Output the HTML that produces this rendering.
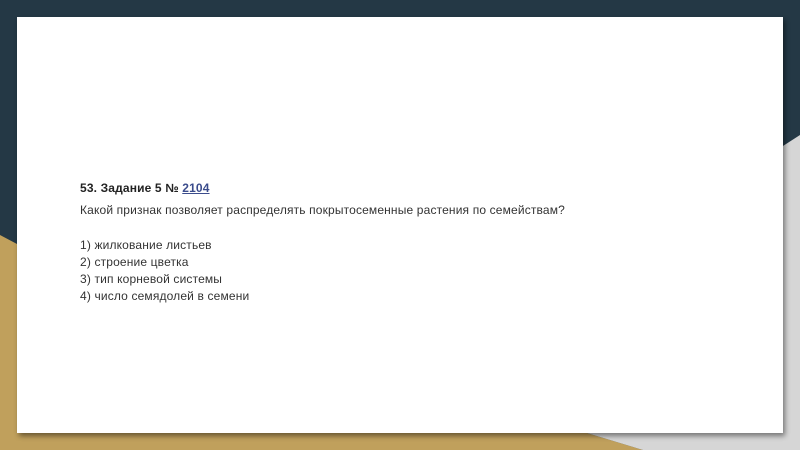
<!DOCTYPE html>
<html><head><meta charset="utf-8"><style>
html,body{margin:0;padding:0;width:800px;height:450px;overflow:hidden;background:#243845;position:relative;}
svg.bg{position:absolute;left:0;top:0;}
.card{position:absolute;left:17px;top:17px;width:766px;height:416px;background:#fff;box-shadow:2px 3px 5px rgba(0,0,0,0.45);}
.t{position:absolute;left:80px;font-family:"Liberation Sans",Arial,sans-serif;font-size:12px;line-height:14px;color:#333;white-space:nowrap;letter-spacing:0.15px;}
.b{font-weight:bold;color:#222;}
a{color:#3b4c8c;text-decoration:underline;}
</style></head><body>
<svg class="bg" width="800" height="450">
<polygon points="0,235 17,244 500,400 587,433 643,450 0,450" fill="#c0a05c"/>
<polygon points="800,135 560,290 560,425 587,433 643,450 800,450" fill="#d6d6d6"/>
</svg>
<div class="card"></div>
<div class="t b" style="top:181px">53. Задание 5 № <a>2104</a></div>
<div class="t" style="top:203px">Какой признак позволяет распределять покрытосеменные растения по семействам?</div>
<div class="t" style="top:238px">1) жилкование листьев</div>
<div class="t" style="top:255px">2) строение цветка</div>
<div class="t" style="top:272px">3) тип корневой системы</div>
<div class="t" style="top:289px">4) число семядолей в семени</div>
</body></html>
